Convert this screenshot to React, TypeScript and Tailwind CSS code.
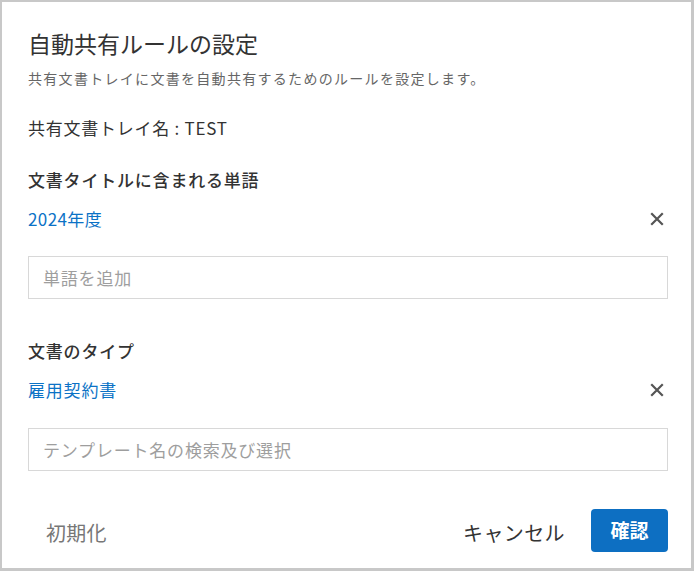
import React from "react";

function XIcon() {
  return (
    <svg width="14" height="14" viewBox="0 0 14 14" fill="none" stroke="#555" strokeWidth="2.2" strokeLinecap="square">
      <path d="M2 2 L12 12 M12 2 L2 12" />
    </svg>
  );
}

export default function App() {
  const font = { fontFamily: '"Noto Sans CJK JP", "Noto Sans", sans-serif' };
  return (
    <div className="w-[694px] h-[571px] bg-white" style={font}>
      <div className="w-full h-full border-t-2 border-l-2 border-r-[3px] border-b-[3px] border-[#c8c8c8] pl-[26px] pr-[23px] pt-[26px] flex flex-col">
        <h1 className="text-[23px] leading-[30px] text-[#333] font-normal tracking-[0px]">自動共有ルールの設定</h1>
        <p className="mt-[10px] text-[14px] leading-[20px] text-[#666] tracking-[1.3px]">共有文書トレイに文書を自動共有するためのルールを設定します。</p>
        <p className="mt-[28px] text-[17px] leading-[24px] text-[#333] tracking-[0.75px]">共有文書トレイ名 : TEST</p>

        <p className="mt-[28px] text-[17px] leading-[24px] text-[#333] font-medium tracking-[0.8px]">文書タイトルに含まれる単語</p>
        <div className="mt-[15px] flex items-center justify-between h-[24px]">
          <span className="text-[17px] leading-[24px] text-[#0b72c6] tracking-[0.4px]">2024年度</span>
          <span className="mr-[4px] flex items-center"><XIcon /></span>
        </div>
        <div className="mt-[25px] h-[43px] border border-[#d8d8d8] flex items-center px-[14px]">
          <span className="text-[17px] text-[#9e9e9e] tracking-[0.8px]">単語を追加</span>
        </div>

        <p className="mt-[40px] text-[17px] leading-[24px] text-[#333] font-medium tracking-[0.8px]">文書のタイプ</p>
        <div className="mt-[15px] flex items-center justify-between h-[24px]">
          <span className="text-[17px] leading-[24px] text-[#0b72c6] tracking-[0.8px]">雇用契約書</span>
          <span className="mr-[4px] flex items-center"><XIcon /></span>
        </div>
        <div className="mt-[26px] h-[43px] border border-[#d8d8d8] flex items-center px-[14px]">
          <span className="text-[17px] text-[#9e9e9e] tracking-[0.8px]">テンプレート名の検索及び選択</span>
        </div>

        <div className="mt-[38px] flex items-center">
          <button className="ml-[18px] text-[20px] leading-[26px] text-[#777] tracking-[0.3px] pt-[5px]">初期化</button>
          <div className="ml-auto flex items-center">
            <button className="text-[20px] leading-[26px] text-[#333] tracking-[0.4px] pt-[5px]">キャンセル</button>
            <button className="ml-[26px] w-[77px] h-[43px] rounded-[4px] bg-[#0d6fc2] text-white text-[19px] font-bold flex items-center justify-center">確認</button>
          </div>
        </div>
      </div>
    </div>
  );
}
